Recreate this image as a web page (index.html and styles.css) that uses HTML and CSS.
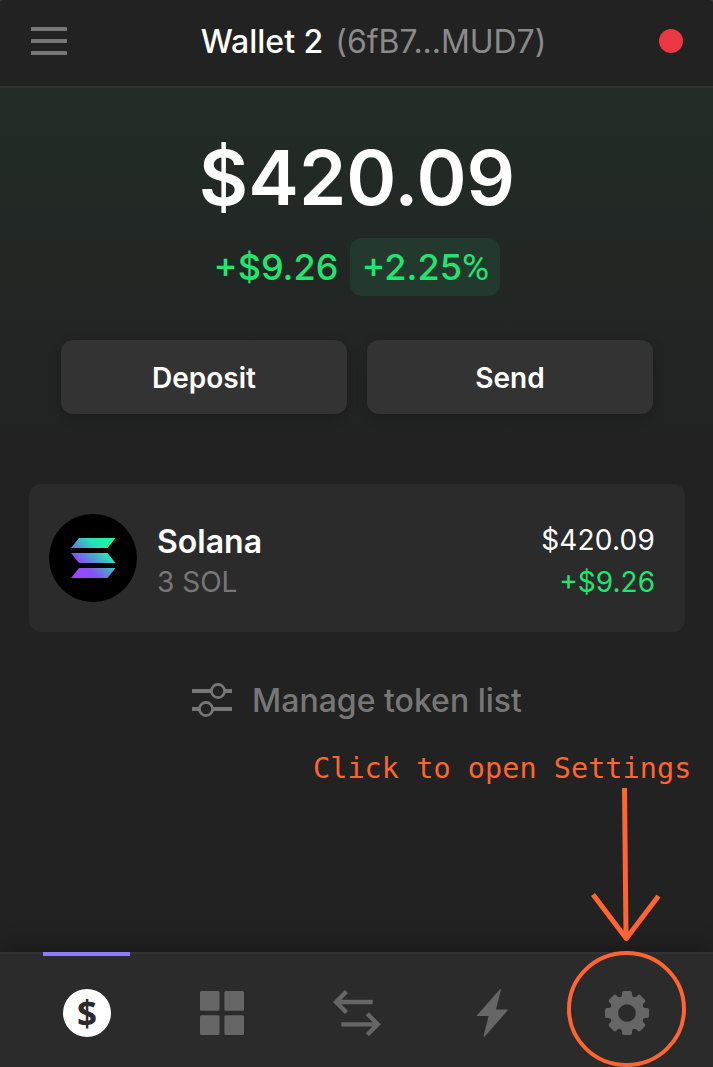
FILE: index.html
```
<!DOCTYPE html>
<html lang="en">
<head>
<meta charset="utf-8">
<title>Wallet</title>
<link rel="stylesheet" href="styles.css">
</head>
<body>
<div class="app">
  <header class="header">
    <svg class="menu" width="36" height="28" viewBox="0 0 36 28" fill="#777"><rect width="36" height="4" rx=".6"/><rect y="12" width="36" height="4" rx=".6"/><rect y="24" width="36" height="4" rx=".6"/></svg>
    <h1 class="title"><span class="name">Wallet 2</span><span class="address">(6fB7...MUD7)</span></h1>
    <span class="status"></span>
  </header>
  <main class="main">
    <div class="balance">$420.09</div>
    <div class="change"><span class="delta">+$9.26</span><span class="percent">+2.25<span class="sign">%</span></span></div>
    <div class="actions"><button class="button">Deposit</button><button class="button">Send</button></div>
    <section class="token">
      <svg class="logo" width="88" height="88" viewBox="0 0 88 88">
        <defs><linearGradient id="sol" gradientUnits="userSpaceOnUse" x1="25" y1="64" x2="62" y2="24"><stop offset="0.08" stop-color="#9945ff"/><stop offset="0.3" stop-color="#8752f3"/><stop offset="0.5" stop-color="#5497d5"/><stop offset="0.7" stop-color="#28e0b9"/><stop offset="1" stop-color="#19fb9b"/></linearGradient></defs>
        <circle cx="44" cy="44" r="44"/>
        <path fill="url(#sol)" d="M30 24h36.5l-8 10H22zM22 39h36.500l8 10H30zM30 54h36.500l-8 10H22z"/>
      </svg>
      <div class="info"><div class="token-name">Solana</div><div class="amount">3 SOL</div></div>
      <div class="value"><div class="fiat">$420.09</div><div class="gain">+$9.26</div></div>
    </section>
    <div class="manage">
      <svg width="40" height="34" viewBox="0 0 40 34" fill="none" stroke="#777" stroke-width="4"><path d="M0 8h19M33 8h7M0 26h7M21 26h19"/><g stroke-width="2.700"><circle cx="26" cy="8" r="6.600"/><circle cx="14" cy="26" r="6.600"/></g></svg>
      <span class="manage-text">Manage token list</span>
    </div>
  </main>
  <nav class="nav">
    <div class="tab active"><span class="coin">$</span></div>
    <div class="tab"><svg width="48" height="48" viewBox="0 0 48 48" fill="#666"><rect x="2" y="2" width="19.500" height="19.700" rx="1.500"/><rect x="26.400" y="2" width="19.600" height="19.700" rx="1.500"/><rect x="2" y="26.300" width="19.500" height="19.700" rx="1.500"/><rect x="26.400" y="26.300" width="19.600" height="19.700" rx="1.500"/></svg></div>
    <div class="tab"><svg width="48" height="48" viewBox="0 0 48 48" fill="none" stroke="#666" stroke-width="4.300"><path d="M39.700 13H3M13.500 2.500L3 13l10.500 10.500M8.300 35.300h36.500M34.300 24.800l10.500 10.500-10.500 10.500"/></svg></div>
    <div class="tab"><svg width="48" height="48" viewBox="0 0 48 48" fill="#666"><path d="M32 .2L9 26.300q-.6.8.4.8H20.600L15.500 47.200q.2 1 1.200.3L39.600 21.600q.4-.9-.6-1H28L33 .6Q32.700-.3 32 .2z"/></svg></div>
    <div class="tab"><svg width="48" height="48" viewBox="-24 -24 48 48" fill="#666"><defs><path id="tooth" d="M-6.500-15L-5-18V-20Q-5-22-3-22H3Q5-22 5-20V-18L6.500-15z"/></defs><circle r="13" fill="none" stroke="#666" stroke-width="8.400"/><use href="#tooth"/><use href="#tooth" transform="rotate(45)"/><use href="#tooth" transform="rotate(90)"/><use href="#tooth" transform="rotate(135)"/><use href="#tooth" transform="rotate(180)"/><use href="#tooth" transform="rotate(225)"/><use href="#tooth" transform="rotate(270)"/><use href="#tooth" transform="rotate(315)"/></svg></div>
  </nav>
  <div class="hint">Click to open Settings</div>
  <svg class="pointer" width="160" height="287" viewBox="553 780 160 287" fill="none" stroke="#ff6432"><path d="M624.500 788L626 936M593 894.500L626.300 938.500L658.500 896" stroke-width="5" stroke-linejoin="round"/><ellipse cx="626.500" cy="1009" rx="57.500" ry="56" stroke-width="4"/></svg>
</div>
</body>
</html>
```
FILE: styles.css
```
* { box-sizing: border-box; }
body { margin: 0; background: #3a3a3a; font-family: Inter, "Liberation Sans", sans-serif; }
.app { position: relative; display: flex; flex-direction: column; width: 713px; height: 1067px; overflow: hidden; border-radius: 4px 4px 0 0; background: #222; color: #fff; }
.header { display: flex; align-items: center; justify-content: space-between; height: 88px; padding: 0 30px 4px 31px; border-bottom: 2px solid #333; flex: none; }
.menu { display: block; }
.title { display: flex; gap: 12px; margin: 0 0 0 21px; padding-top: 2px; font-size: 32px; line-height: 40px; font-weight: 500; }
.address { font-weight: 400; letter-spacing: -.05px; color: #8a8a8a; }
.status { width: 24px; height: 24px; border-radius: 50%; background: #eb3742; }
.main { flex: 1; padding: 40px 28px 0 29px; background: linear-gradient(#222c27, #222 360px); }
.balance { height: 100px; line-height: 98px; text-align: center; font-size: 76px; font-weight: 600; }
.change { display: flex; justify-content: center; align-items: center; gap: 12px; height: 58px; margin-top: 10px; font-size: 36px; font-weight: 500; color: #21e56f; }
.percent { width: 150px; height: 58px; line-height: 58px; padding: 0 0 0 11px; border-radius: 12px; background: #23392d; white-space: nowrap; }
.sign { font-family: Roboto, sans-serif; font-weight: 400; font-size: 37px; line-height: 1; }
.actions { display: grid; grid-template-columns: 1fr 1fr; gap: 20px; margin: 44px 32px 0; }
.button { height: 74px; padding: 2px 0 0; border: 0; border-radius: 12px; background: #333; color: #fff; font: 600 28px Inter, sans-serif; box-shadow: 0 4px 12px rgba(0, 0, 0, .2); }
.token { display: flex; align-items: center; height: 148px; margin-top: 70px; padding: 0 30px 0 20px; border-radius: 12px; background: #2b2b2b; }
.logo { flex: none; }
.info { flex: 1; padding: 8px 0 0 20px; }
.token-name { font-size: 32px; line-height: 40px; font-weight: 600; }
.amount, .fiat, .gain { font-size: 28px; line-height: 42px; }
.amount { line-height: 40px; color: #777; }
.value { text-align: right; padding-top: 6px; }
.fiat { letter-spacing: .2px; }
.gain { color: #21e56f; }
.manage { display: flex; justify-content: center; align-items: center; gap: 20px; height: 40px; margin-top: 48px; color: #777; }
.manage-text { padding-top: 2px; font-size: 32px; line-height: 40px; font-weight: 500; }
.nav { display: grid; grid-template-columns: repeat(5, 135px); justify-content: center; flex: none; height: 115px; border-top: 2px solid #333; background: #2b2b2b; box-shadow: 0 -4px 24px rgba(0, 0, 0, .3); }
.tab { display: flex; justify-content: center; padding-top: 35px; }
.active::before { content: ""; position: absolute; top: 952px; width: 87px; height: 4px; background: #8a7eff; }
.coin { width: 48px; height: 48px; padding-left: 1px; border-radius: 50%; background: #fff; color: #2b2b2b; text-align: center; font: 700 35px/48px "Noto Sans", sans-serif; }
.hint { position: absolute; left: 313px; top: 749px; font: 28.500px/40px "DejaVu Sans Mono", monospace; letter-spacing: .04px; color: #ff6432; white-space: nowrap; }
.pointer { position: absolute; left: 553px; top: 780px; }
```
